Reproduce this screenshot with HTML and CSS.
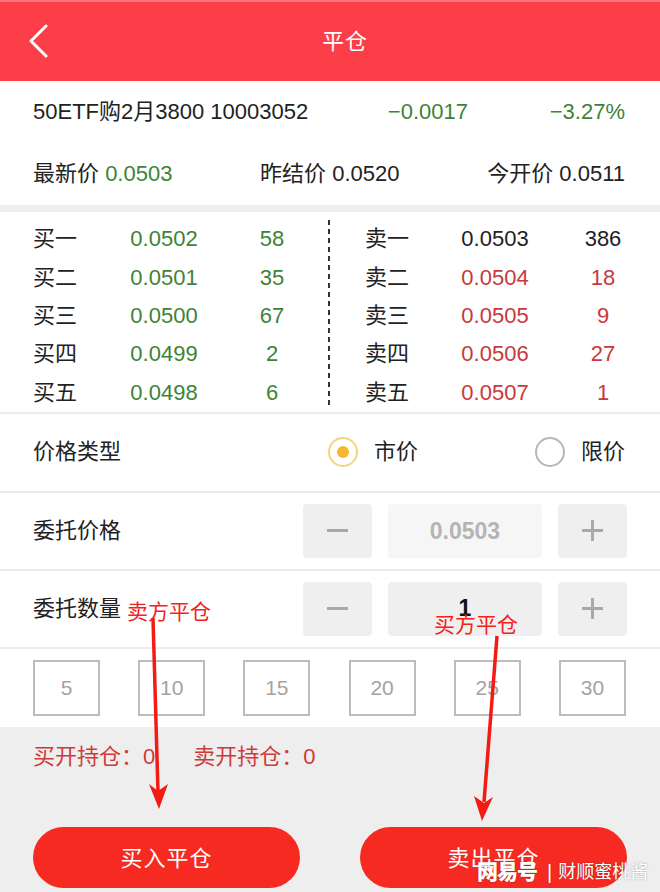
FILE: index.html
```html
<!DOCTYPE html>
<html lang="zh">
<head>
<meta charset="utf-8">
<title>平仓</title>
<link rel="stylesheet" href="styles.css">
</head>
<body>
<div class="page">
  <header class="topbar">
    <svg class="back" width="20" height="34" viewBox="0 0 20 34"><polyline points="17,2 2,17 17,32" fill="none" stroke="#fff" stroke-width="3" stroke-linecap="round" stroke-linejoin="round"/></svg>
    <h1 class="title">平仓</h1>
  </header>

  <section class="info">
    <div class="info-row quote">
      <span class="name">50ETF购2月3800 10003052</span>
      <span class="chg green">−0.0017</span>
      <span class="pct green">−3.27%</span>
    </div>
    <div class="info-row stats">
      <span>最新价 <span class="green">0.0503</span></span>
      <span>昨结价 0.0520</span>
      <span>今开价 0.0511</span>
    </div>
  </section>

  <section class="book">
    <div class="half buy">
      <span>买一</span><span class="green">0.0502</span><span class="green">58</span>
      <span>买二</span><span class="green">0.0501</span><span class="green">35</span>
      <span>买三</span><span class="green">0.0500</span><span class="green">67</span>
      <span>买四</span><span class="green">0.0499</span><span class="green">2</span>
      <span>买五</span><span class="green">0.0498</span><span class="green">6</span>
    </div>
    <div class="divider"></div>
    <div class="half sell">
      <span>卖一</span><span>0.0503</span><span>386</span>
      <span>卖二</span><span class="red">0.0504</span><span class="red">18</span>
      <span>卖三</span><span class="red">0.0505</span><span class="red">9</span>
      <span>卖四</span><span class="red">0.0506</span><span class="red">27</span>
      <span>卖五</span><span class="red">0.0507</span><span class="red">1</span>
    </div>
  </section>

  <section class="form-row type-row">
    <span class="label">价格类型</span>
    <div class="radios">
      <span class="radio checked"><i></i></span><span class="radio-text">市价</span>
      <span class="radio gap"></span><span class="radio-text">限价</span>
    </div>
  </section>

  <section class="form-row">
    <span class="label">委托价格</span>
    <div class="stepper">
      <span class="step"><i class="minus"></i></span>
      <span class="field disabled">0.0503</span>
      <span class="step"><i class="plus"></i></span>
    </div>
  </section>

  <section class="form-row">
    <span class="label">委托数量</span>
    <div class="stepper">
      <span class="step"><i class="minus"></i></span>
      <span class="field qty">1</span>
      <span class="step"><i class="plus"></i></span>
    </div>
  </section>

  <section class="quick">
    <span class="q">5</span><span class="q">10</span><span class="q">15</span><span class="q">20</span><span class="q">25</span><span class="q">30</span>
  </section>

  <section class="bottom">
    <div class="hold">
      <span>买开持仓：0</span>
      <span>卖开持仓：0</span>
    </div>
    <div class="actions">
      <button class="btn">买入平仓</button>
      <button class="btn">卖出平仓</button>
    </div>
  </section>

  <span class="note note-sell">卖方平仓</span>
  <span class="note note-buy">买方平仓</span>
  <svg class="arrows" width="660" height="892" viewBox="0 0 660 892">
    <line x1="153" y1="618" x2="158" y2="792" stroke="#f21c15" stroke-width="3.5"/>
    <polygon points="159,809 149,784 158,791 168,784" fill="#f21c15"/>
    <line x1="497" y1="636" x2="484" y2="802" stroke="#f21c15" stroke-width="3.5"/>
    <polygon points="482,821 474,796 484,803 493,797" fill="#f21c15"/>
  </svg>

  <div class="watermark"><b>网易号</b><span class="sep">|</span><span>财顺蜜桃酱</span></div>
</div>
</body>
</html>
```

FILE: styles.css
```css
* { box-sizing: border-box; margin: 0; padding: 0; }
html, body { width: 660px; height: 892px; overflow: hidden; }
body {
  background: #eeeeee;
  font-family: "Liberation Sans", "Noto Sans CJK SC", sans-serif;
  line-height: 26px;
  color: #222;
}
.page { position: relative; width: 660px; height: 892px; }

.green { color: #3e8337; }
.red { color: #c9383a; }

.topbar {
  height: 81px;
  background: #fb3e48;
  border-top: 2px solid #f3777c;
  display: flex;
  align-items: center;
}
.back { margin-left: 29px; flex: none; margin-top: -2px; }
.title {
  margin-left: 273px;
  font-size: 22px;
  font-weight: normal;
  color: #fff;
  letter-spacing: 1px;
}

.info { background: #fff; padding: 0 35px 0 33px; border-bottom: 7px solid #efefef; }
.info-row { height: 62px; display: flex; align-items: center; font-size: 22px; }
.quote { display: grid; grid-template-columns: 1fr auto 157px; }
.quote .pct { text-align: right; }
.stats { justify-content: space-between; }

.book {
  background: #fff;
  display: grid;
  grid-template-columns: 328px 2px 1fr;
  padding-top: 8px;
  border-bottom: 2px solid #ececec;
  font-size: 22px;
}
.half { display: grid; grid-auto-rows: 38.4px; align-items: center; }
.buy { padding-left: 33px; grid-template-columns: 64px 134px 82px; }
.sell { padding-left: 35px; grid-template-columns: 64px 132px 84px; }
.half span:nth-child(3n+2), .half span:nth-child(3n) { text-align: center; }
.divider {
  margin-bottom: 7px;
  background: repeating-linear-gradient(to bottom, #333 0 5px, transparent 5px 9px);
}

.form-row {
  background: #fff;
  height: 78px;
  border-bottom: 2px solid #ececec;
  display: flex;
  align-items: center;
  padding: 0 33px;
  font-size: 22px;
}
.type-row { height: 79px; padding-right: 35px; }
.label { flex: none; }
.radios { margin-left: auto; display: flex; align-items: center; }
.radio {
  width: 30px; height: 30px; border-radius: 50%;
  border: 2px solid #b6b6b6;
  display: flex; align-items: center; justify-content: center;
}
.radio.checked { border-color: #f2d57e; }
.radio.checked i { width: 12px; height: 12px; border-radius: 50%; background: #f4b92e; }
.radio.gap { margin-left: 117px; }
.radio-text { margin-left: 16px; }

.stepper { margin-left: auto; display: flex; gap: 16px; }
.step, .field {
  height: 54px;
  border-radius: 4px;
  background: #efefef;
  display: flex; align-items: center; justify-content: center;
}
.step { width: 69px; position: relative; }
.field { width: 154px; font-size: 23px; font-weight: bold; }
.field.disabled { background: #f6f6f6; color: #b4b4b4; }
.field.qty { color: #111; padding-bottom: 2px; }
.minus, .plus { display: block; width: 21px; height: 3px; background: #a9a9a9; position: relative; }
.plus::after {
  content: ""; position: absolute; left: 9px; top: -9px; width: 3px; height: 21px; background: #a9a9a9;
}

.quick {
  background: #fff;
  height: 78px;
  display: flex;
  align-items: center;
  justify-content: space-between;
  padding: 0 34px 0 33px;
}
.q {
  width: 67px; height: 56px;
  border: 2px solid #bcbcbc;
  display: flex; align-items: center; justify-content: center;
  font-size: 21px; color: #a3a3a3;
}

.bottom { padding: 18px 33px 0; }
.hold { display: flex; gap: 38px; font-size: 22px; line-height: 24px; color: #cf3a3b; }
.actions { display: flex; justify-content: space-between; margin-top: 58px; }
.btn {
  width: 267px; height: 61px;
  border: none; border-radius: 31px;
  background: #f72a22;
  color: #fff;
  font-family: inherit;
  font-size: 22px;
  line-height: 26px;
  letter-spacing: 1px;
  padding-top: 3px;
}

.note {
  position: absolute;
  font-size: 21px;
  line-height: 24px;
  color: #f2231b;
}
.note-sell { left: 127px; top: 600px; }
.note-buy { left: 434px; top: 613px; }
.arrows { position: absolute; left: 0; top: 0; pointer-events: none; }

.watermark {
  position: absolute;
  left: 477px; top: 859px;
  display: flex; align-items: center;
  color: #fff;
  font-size: 18px;
  line-height: 26px;
  text-shadow: 0 0 2px rgba(0,0,0,0.35);
}
.watermark b { font-size: 21px; font-weight: 900; letter-spacing: -1px; }
.watermark .sep { margin: 0 6px 0 10px; font-size: 20px; }
```
